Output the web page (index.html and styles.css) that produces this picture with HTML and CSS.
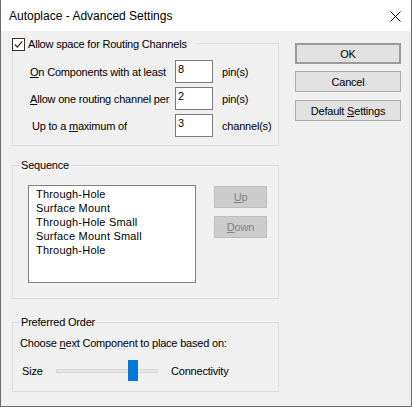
FILE: index.html
```html
<!DOCTYPE html>
<html>
<head>
<meta charset="utf-8">
<link rel="stylesheet" href="styles.css">
</head>
<body>
<div class="window">
  <div class="titlebar">
    <span class="title">Autoplace - Advanced Settings</span>
    <svg class="close" width="11" height="11" viewBox="0 0 11 11"><path d="M0.5 0.5 L10.5 10.5 M10.5 0.5 L0.5 10.5" stroke="#000" stroke-width="1" fill="none"/></svg>
  </div>
  <div class="client">
    <div class="left">
      <div class="group g1">
        <div class="legend legend-check">
          <span class="checkbox"><svg width="11" height="11" viewBox="0 0 11 11"><path d="M1.8 5.4 L4.3 8 L9.3 2.3" stroke="#333" stroke-width="1.2" fill="none"/></svg></span>
          <span>Allow space for Routing Channels</span>
        </div>
        <div class="rows">
          <span class="lbl"><u>O</u>n Components with at least</span><span class="input">8</span><span class="unit">pin(s)</span>
          <span class="lbl"><u>A</u>llow one routing channel per</span><span class="input">2</span><span class="unit">pin(s)</span>
          <span class="lbl lbl-indent">Up to a <u>m</u>aximum of</span><span class="input">3</span><span class="unit">channel(s)</span>
        </div>
      </div>
      <div class="group g2">
        <div class="legend legend-text">Sequence</div>
        <div class="seq-body">
          <div class="listbox">
            <div>Through-Hole</div>
            <div>Surface Mount</div>
            <div>Through-Hole Small</div>
            <div>Surface Mount Small</div>
            <div>Through-Hole</div>
          </div>
          <div class="seq-buttons">
            <div class="btn-disabled"><span><u>U</u>p</span></div>
            <div class="btn-disabled"><span><u>D</u>own</span></div>
          </div>
        </div>
      </div>
      <div class="group g3">
        <div class="legend legend-text">Preferred Order</div>
        <div class="choose">Choose <u>n</u>ext Component to place based on:</div>
        <div class="slider-row">
          <span class="size-lbl">Size</span>
          <span class="track"><span class="thumb"></span></span>
          <span class="conn-lbl">Connectivity</span>
        </div>
      </div>
    </div>
    <div class="right">
      <div class="btn btn-default"><span>OK</span></div>
      <div class="btn btn-cancel"><span>Cancel</span></div>
      <div class="btn btn-settings"><span>Default <u>S</u>ettings</span></div>
    </div>
  </div>
</div>
</body>
</html>
```
FILE: styles.css
```css
* { box-sizing: border-box; }
body {
  margin: 0;
  font-family: "Liberation Sans", Arial, sans-serif;
  font-size: 11px;
  letter-spacing: -0.2px;
  color: #000;
}
.window {
  width: 412px;
  height: 407px;
  background: #f0f0f0;
  border: 1px solid #6b6b6b;
  border-top: none;
}
.titlebar {
  height: 31px;
  background: #fff;
  display: flex;
  align-items: center;
  justify-content: space-between;
  padding: 0 10px 0 8px;
}
.title { font-size: 12px; letter-spacing: 0; }
.close { display: block; margin-top: 2px; }
.client { display: flex; padding-left: 11px; }
.left { width: 267px; margin-top: 12px; }
.group { border: 1px solid #dcdcdc; }
.legend {
  display: flex;
  align-items: center;
  width: max-content;
  height: 14px;
  line-height: 14px;
  background: #f0f0f0;
}
.legend-check { margin: -7px 0 0 -1px; padding-right: 9px; gap: 3px; }
.legend-text { margin: -8px 0 0 7px; padding: 0 1px; }
.checkbox {
  width: 13px;
  height: 13px;
  border: 1px solid #333;
  background: #fff;
  display: flex;
}
.checkbox svg { display: block; }
.rows {
  display: grid;
  grid-template-columns: 145px 38px auto;
  grid-auto-rows: 23px;
  row-gap: 4px;
  align-items: center;
  margin-top: 9px;
  padding: 0 0 8px 17px;
}
.lbl-indent { padding-left: 2px; }
.input {
  height: 23px;
  background: #fff;
  border: 1px solid #7a7a7a;
  padding: 1px 0 0 2px;
  line-height: 14px;
}
.unit { padding-left: 9px; }
.g2 { margin-top: 19px; }
.seq-body {
  display: flex;
  align-items: flex-start;
  gap: 18px;
  margin-top: 13px;
  padding: 0 0 15px 15px;
}
.listbox {
  width: 168px;
  height: 98px;
  background: #fff;
  border: 1px solid #828282;
  padding: 1px 0 0 7px;
  line-height: 14px;
  letter-spacing: 0.2px;
}
.seq-buttons {
  display: flex;
  flex-direction: column;
  gap: 8px;
  margin-top: 1px;
}
.btn-disabled {
  width: 53px;
  height: 22px;
  background: #cccccc;
  border: 1px solid #bfbfbf;
  color: #838383;
  display: flex;
  align-items: center;
  justify-content: center;
}
.g3 { margin-top: 23px; padding-bottom: 10px; }
.choose { margin-top: 7px; padding-left: 7px; line-height: 14px; }
.slider-row {
  display: flex;
  align-items: center;
  height: 21px;
  margin-top: 10px;
  padding-left: 9px;
}
.size-lbl { width: 34px; }
.track {
  position: relative;
  width: 102px;
  height: 4px;
  background: #e7e7e7;
  border: 1px solid #d6d6d6;
}
.thumb {
  position: absolute;
  left: 71px;
  top: -10px;
  width: 10px;
  height: 21px;
  background: #0078d7;
}
.conn-lbl { margin-left: 13px; }
.right { margin: 12px 0 0 16px; display: flex; flex-direction: column; }
.btn {
  width: 106px;
  height: 21px;
  background: #e1e1e1;
  border: 1px solid #adadad;
  display: flex;
  align-items: center;
  justify-content: center;
}
.btn-default { border: 2px solid #9a9a9a; }
.btn-cancel { margin-top: 7px; }
.btn-settings { margin-top: 8px; }
```
